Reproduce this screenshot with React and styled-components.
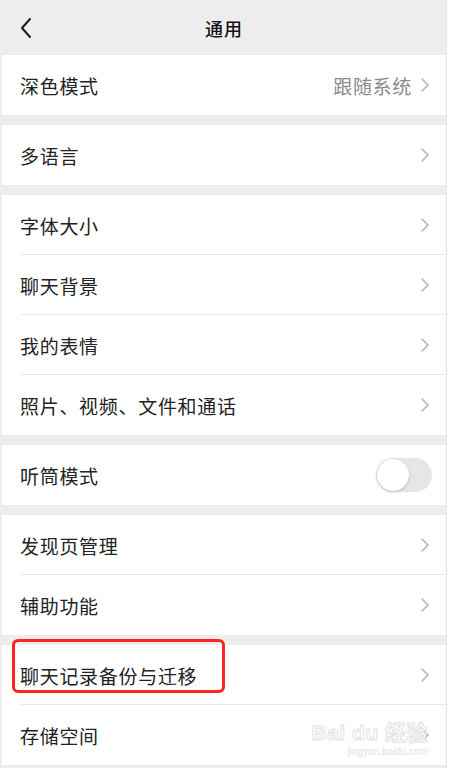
import React from "react";
import styled, { createGlobalStyle } from "styled-components";

const GlobalStyle = createGlobalStyle`
  html, body {
    margin: 0;
    padding: 0;
    background: #fff;
  }
  body {
    font-family: "Noto Sans CJK SC", "Noto Sans", sans-serif;
    color: #1c1c1c;
  }
`;

const Frame = styled.div`
  width: 453px;
  height: 768px;
  overflow: hidden;
  display: flex;
  background: #fff;
`;

const Screen = styled.div`
  position: relative;
  width: 445px;
  margin-left: 2px;
  border-right: 1px solid #e4e4e4;
  background: #ededed;
  display: flex;
  flex-direction: column;
  gap: 10px;
  box-sizing: border-box;
  &::before {
    content: "";
    position: absolute;
    left: -2px;
    top: 0;
    bottom: 0;
    width: 2px;
    background: #ededed;
  }
`;

const Header = styled.div`
  height: 55px;
  flex-shrink: 0;
  display: grid;
  grid-template-columns: 60px 1fr 60px;
  align-items: center;
  margin-bottom: -10px;
`;

const Back = styled.div`
  padding-left: 17px;
  display: flex;
  align-items: center;
`;

const Title = styled.div`
  text-align: center;
  font-size: 18px;
  font-weight: 500;
  color: #111;
  letter-spacing: 1px;
`;

const Group = styled.div`
  background: #fff;
  display: flex;
  flex-direction: column;
  flex-shrink: 0;
`;

const Row = styled.div`
  position: relative;
  height: 60px;
  display: flex;
  align-items: center;
  padding: 0 16px 0 18px;
  &:not(:last-child)::after {
    content: "";
    position: absolute;
    left: 18px;
    right: 0;
    bottom: 0;
    height: 1px;
    background: #e8e8e8;
  }
`;

const Label = styled.div`
  flex: 1;
  font-size: 19px;
  letter-spacing: 0.7px;
  color: #222;
`;

const Value = styled.div`
  font-size: 19px;
  letter-spacing: 0.7px;
  color: #8a8a8a;
  margin-right: 8px;
`;

const Toggle = styled.div`
  width: 56px;
  height: 34px;
  border-radius: 17px;
  background: #e6e6e6;
  display: flex;
  align-items: center;
  padding: 1px;
  box-sizing: border-box;
  margin-right: -2px;
`;

const Knob = styled.div`
  width: 32px;
  height: 32px;
  border-radius: 50%;
  background: #fff;
  box-shadow: 0 1px 3px rgba(0, 0, 0, 0.22);
`;

const Highlight = styled.div`
  position: absolute;
  left: 10px;
  top: -6px;
  width: 213px;
  height: 54px;
  border: 3px solid #ff2424;
  border-radius: 6px;
  box-sizing: border-box;
  pointer-events: none;
`;

const Watermark = styled.div`
  position: absolute;
  right: 18px;
  bottom: 10px;
  display: flex;
  flex-direction: column;
  align-items: flex-end;
  pointer-events: none;
  font-family: "Liberation Sans", "Noto Sans CJK SC", sans-serif;
`;

const MarkTop = styled.div`
  font-size: 21px;
  font-weight: 700;
  letter-spacing: 0.5px;
  line-height: 22px;
  -webkit-text-stroke: 1px #e2e2e2;
  color: #fff;
`;

const MarkUrl = styled.div`
  font-size: 10px;
  color: #e2e2e2;
  line-height: 12px;
  margin-top: 2px;
`;

const Chevron = () => (
  <svg width="10" height="16" viewBox="0 0 10 16">
    <path d="M2 2l6 6-6 6" fill="none" stroke="#b5b5b5" strokeWidth="1.6" strokeLinecap="round" strokeLinejoin="round" />
  </svg>
);

const BackIcon = () => (
  <svg width="14" height="22" viewBox="0 0 14 22">
    <path d="M11 2L3 11l8 9" fill="none" stroke="#1a1a1a" strokeWidth="2" strokeLinecap="round" strokeLinejoin="round" />
  </svg>
);

const groups = [
  [{ label: "深色模式", value: "跟随系统" }],
  [{ label: "多语言" }],
  [
    { label: "字体大小" },
    { label: "聊天背景" },
    { label: "我的表情" },
    { label: "照片、视频、文件和通话" },
  ],
  [{ label: "听筒模式", toggle: true }],
  [{ label: "发现页管理" }, { label: "辅助功能" }],
  [{ label: "聊天记录备份与迁移", marked: true }, { label: "存储空间" }],
];

export default function App() {
  return (
    <Frame>
      <GlobalStyle />
      <Screen>
        <Header>
          <Back>
            <BackIcon />
          </Back>
          <Title>通用</Title>
          <div />
        </Header>
        {groups.map((items, gi) => (
          <Group key={gi}>
            {items.map((item) => (
              <Row key={item.label}>
                <Label>{item.label}</Label>
                {item.value && <Value>{item.value}</Value>}
                {item.toggle ? (
                  <Toggle>
                    <Knob />
                  </Toggle>
                ) : (
                  <Chevron />
                )}
                {item.marked && <Highlight />}
              </Row>
            ))}
          </Group>
        ))}
        <Watermark>
          <MarkTop>Bai du 经验</MarkTop>
          <MarkUrl>jingyan.baidu.com</MarkUrl>
        </Watermark>
      </Screen>
    </Frame>
  );
}
